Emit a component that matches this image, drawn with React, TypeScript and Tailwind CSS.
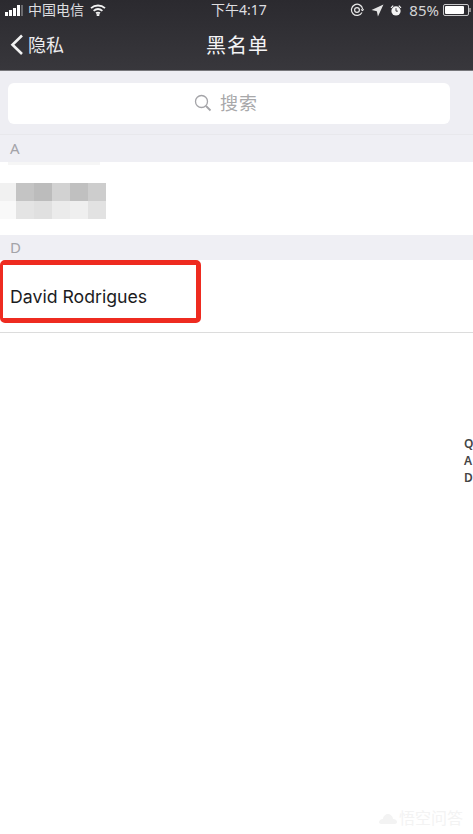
import React from 'react';

const mosaicTop = ['bg-[#c4c4c4]', 'bg-[#bcbcbc]', 'bg-[#d2d2d2]', 'bg-[#c0c0c0]', 'bg-[#cdcdcd]'];
const mosaicBottom = ['bg-[#e4e4e4]', 'bg-[#e0e0e0]', 'bg-[#ebebeb]', 'bg-[#efefef]', 'bg-[#e2e2e2]'];

function StatusBar() {
  return (
    <div className="h-[20px] flex items-center justify-between pl-[5px] pr-[2px] text-[14px] leading-none text-[#dedee0]">
      <div className="flex items-center flex-1">
        <div className="flex items-end gap-[1px] h-[11px]">
          <span className="w-[3px] h-[4px] bg-white" />
          <span className="w-[3px] h-[6px] bg-white" />
          <span className="w-[3px] h-[8px] bg-white" />
          <span className="w-[3px] h-[11px] bg-white" />
          <span className="w-[2px] h-[11px] bg-[#6a6a6e]" />
        </div>
        <span className="ml-[5px]">中国电信</span>
        <svg className="ml-[6px]" width="16" height="12" viewBox="0 0 16 12" fill="none" stroke="#f2f2f2" strokeWidth="1.8">
          <path d="M1 4.200C5 .6 11 .6 15 4.200" />
          <path d="M3.600 6.900c2.600-2.200 6.200-2.200 8.800 0" />
          <path d="M6 9.300c1.200-.9 2.800-.9 4 0" />
          <circle cx="8" cy="10.800" r=".6" fill="#f2f2f2" />
        </svg>
      </div>
      <span className="absolute left-[211px] top-[2px] text-[14px] leading-[16px]">下午4:17</span>
      <div className="flex items-center">
        <svg width="14" height="14" viewBox="0 0 14 14" fill="none" stroke="#e8e8e8" strokeWidth="1.2">
          <path d="M12 9.500A5.600 5.600 0 1 1 12.600 6" />
          <circle cx="7" cy="7" r="2.400" />
          <path d="M11 6.500l1.600 1 1-1.400" />
        </svg>
        <svg className="ml-[7px]" width="13" height="13" viewBox="0 0 12 12" fill="#e4e4e4">
          <path d="M11.500.5L6.400 11.500 5.400 6.600.5 5.600z" />
        </svg>
        <svg className="ml-[6px]" width="12" height="13" viewBox="0 0 13 13" fill="#f4f4f4">
          <circle cx="6.500" cy="7" r="5" />
          <path d="M0.600 3.200L3 .8l1 .8L1.500 4zM12.400 3.200L10 .8l-1 .8 2.500 2.400z" />
          <path d="M6.500 4v3.200h2" stroke="#2e2d32" strokeWidth="1" fill="none" />
        </svg>
        <span className="ml-[7px] text-[15px] text-[#d4d4d6]">85%</span>
        <div className="ml-[4px] w-[26px] h-[12px] border border-[#c8c8ca] rounded-[2px] p-[1px]">
          <div className="w-[85%] h-full bg-white rounded-[1px]" />
        </div>
        <span className="w-[2px] h-[4px] bg-[#8a8a8c]" />
      </div>
    </div>
  );
}

function NavBar() {
  return (
    <div className="relative h-[50px] flex items-center justify-center">
      <div className="absolute left-[10px] top-[14px] flex items-center text-[#ececee]">
        <svg width="14" height="22" viewBox="0 0 14 22" fill="none" stroke="#f2f2f2" strokeWidth="2.600">
          <path d="M12 1.500L2.500 10.800 12 20" />
        </svg>
        <span className="ml-[4px] text-[18px] leading-[22px]">隐私</span>
      </div>
      <span className="text-[20px] leading-[24px] text-[#f4f4f6] tracking-[1px] pt-[2px] pl-[2px]">黑名单</span>
    </div>
  );
}

function SectionHeader({ label, height }: { label: string; height: string }) {
  return (
    <div className={`${height} bg-[#efeff4] pl-[10px] pb-[1px] flex items-center text-[15px] text-[#a3a3a8]`}>
      {label}
    </div>
  );
}

export default function App() {
  return (
    <div
      className="relative w-[473px] h-[834px] overflow-hidden bg-white"
      style={{ fontFamily: '"Noto Sans", "Noto Sans CJK SC", sans-serif' }}
    >
      {/* Header */}
      <div className="h-[71px] bg-gradient-to-b from-[#2b2a2f] to-[#38373c] border-b border-b-[#77777b]">
        <StatusBar />
        <NavBar />
      </div>

      {/* Search */}
      <div className="h-[64px] bg-[#eeeef3] border-b border-b-[#e8e8ec] pt-[12px] pl-[8px] pr-[23px]">
        <div className="h-[41px] bg-white rounded-[6px] flex items-center justify-center pr-[6px] pb-[1px]">
          <svg width="18" height="18" viewBox="0 0 18 18" fill="none" stroke="#a4a4a8" strokeWidth="1.300">
            <circle cx="7.500" cy="7.500" r="6" />
            <path d="M12 12l4.500 4.500" strokeWidth="1.800" />
          </svg>
          <span className="ml-[8px] text-[18px] leading-[22px] text-[#a8a8aa] tracking-[1px]">搜索</span>
        </div>
      </div>

      {/* Section A */}
      <SectionHeader label="A" height="h-[27px]" />
      <div className="h-[73px] bg-white">
        <div className="ml-[8px] w-[92px] h-[3px] bg-[#f6f6f6]" />
        <div className="flex mt-[18px]">
          <div className="flex flex-col">
            <div className="w-[16px] h-[18px] bg-[#f1f1f1]" />
            <div className="w-[16px] h-[18px] bg-[#f9f9f9]" />
          </div>
          <div>
            <div className="flex">
              {mosaicTop.map((c, i) => (
                <div key={i} className={`w-[18px] h-[18px] ${c}`} />
              ))}
            </div>
            <div className="flex">
              {mosaicBottom.map((c, i) => (
                <div key={i} className={`w-[18px] h-[18px] ${c}`} />
              ))}
            </div>
          </div>
        </div>
      </div>

      {/* Section D */}
      <SectionHeader label="D" height="h-[25px]" />
      <div className="h-[73px] bg-white border-b border-b-[#dcdcdc] pl-[10px] pt-[25px]">
        <span className="text-[17.7px] leading-[24px] text-[#1c1c1e]" style={{ fontFamily: 'Inter, sans-serif' }}>
          David Rodrigues
        </span>
      </div>

      {/* Red annotation */}
      <div className="absolute left-0 top-[260px] w-[201px] h-[63px] border-[5px] border-l-[3px] border-[#ee2b20] rounded-[5px]" />

      {/* Section index */}
      <div className="absolute left-[464px] top-[436px] flex flex-col gap-[2px] text-[12px] leading-[15px] font-semibold text-[#444444]">
        <span>Q</span>
        <span>A</span>
        <span>D</span>
      </div>

      {/* Watermark */}
      <div className="absolute left-[378px] top-[808px] flex items-center text-[#f3f3f3]">
        <svg width="20" height="14" viewBox="0 0 20 14" fill="#f3f3f3">
          <path d="M1 11c1-3 3-3 4-3 0-3 3-5 5-5s5 2 5 5c2 0 4 1 4 3 0 1-1 2-2 2H3c-1 0-2-1-2-2z" />
        </svg>
        <span className="ml-[1px] text-[16px] leading-[20px]">悟空问答</span>
      </div>
    </div>
  );
}
